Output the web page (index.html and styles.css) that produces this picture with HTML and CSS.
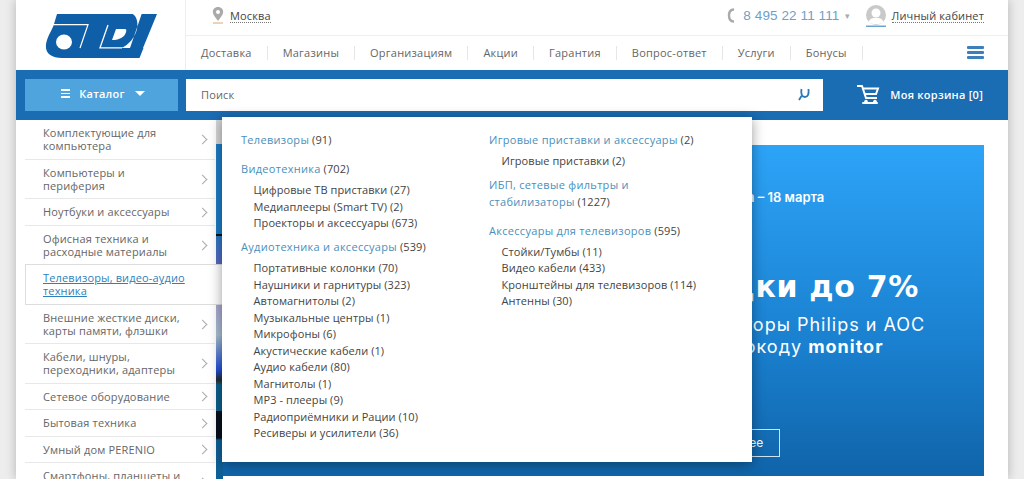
FILE: index.html
```html
<!DOCTYPE html>
<html lang="ru">
<head>
    <meta charset="UTF-8">
    <title>OLDI</title>
    <link rel="stylesheet" href="styles.css">
</head>
<body>
<div class="page">

    <!-- Шапка -->
    <header class="header">
        <a class="logo" href="#">
            <svg width="116" height="50" viewBox="44 12 116 50">
                <path fill="#0f5fa8" d="M57 14H157L143 48H143.500L139.500 58H62C50 58 43 52 47 40C49.500 33 53 28 54 24Z"/>
                <path fill="none" stroke="#fff" stroke-width="1.200" d="M50 24.700H88L80 48"/>
                <path fill="none" stroke="#fff" stroke-width="1.300" d="M108 25L100 47.800H122"/>
                <path fill="#fff" d="M131 13H142L130 48H121C129 45 135 37 137 29C138.500 21 136 15 131 13Z"/>
                <path fill="#fff" d="M116 29H125C127 29 126.500 32 125 34.500C123 38 118 40 112 40Z"/>
                <ellipse fill="#fff" cx="64" cy="42" rx="8" ry="7.500"/>
            </svg>
        </a>
        <div class="header-right">
            <div class="top-row">
                <div class="city">
                    <svg class="pin" width="12" height="17" viewBox="0 0 12 17">
                        <path fill="#aaa" d="M6 0C2.700 0 .8 2.400 .8 5C.8 8 4 11 6 14C8 11 11.200 8 11.200 5C11.200 2.400 9.300 0 6 0Z"/>
                        <circle fill="#fff" cx="6" cy="5" r="2"/>
                        <rect fill="#d9a676" x="1" y="15.500" width="10" height="1"/>
                    </svg>
                    <span class="dotted">Москва</span>
                </div>
                <div class="contacts">
                    <svg class="phone-icon" width="8" height="15" viewBox="0 0 8 15">
                        <path fill="none" stroke="#aaa" stroke-width="2.400" d="M7 1.500C3 1.500 2 4 2 7.500S3 13.500 7 13.500"/>
                    </svg>
                    <span class="phone">8 495 22 11 111</span>
                    <span class="phone-more">▾</span>
                    <svg class="avatar" width="22" height="22" viewBox="0 0 22 22">
                        <circle fill="#c9c9c9" cx="11" cy="10" r="10"/>
                        <circle fill="#fff" cx="11" cy="8" r="4.500"/>
                        <path fill="#fff" d="M3.500 17C5 13 8 13 11 13S17 13 18.500 17C15 20 7 20 3.500 17Z"/>
                        <rect fill="#6aa5d2" x="1" y="20.500" width="20" height="1.500"/>
                    </svg>
                    <span class="dotted">Личный кабинет</span>
                </div>
            </div>
            <nav class="nav">
                <ul>
                    <li><a href="#">Доставка</a></li>
                    <li><a href="#">Магазины</a></li>
                    <li><a href="#">Организациям</a></li>
                    <li><a href="#">Акции</a></li>
                    <li><a href="#">Гарантия</a></li>
                    <li><a href="#">Вопрос-ответ</a></li>
                    <li><a href="#">Услуги</a></li>
                    <li><a href="#">Бонусы</a></li>
                </ul>
                <div class="burger"><span></span><span></span><span></span></div>
            </nav>
        </div>
    </header>

    <!-- Синяя полоса с поиском -->
    <div class="bar">
        <button class="catalog-btn">
            <span class="mini-burger"><span></span><span></span><span></span></span>
            Каталог
            <span class="caret"></span>
        </button>
        <div class="search">
            <span>Поиск</span>
            <svg width="12" height="13" viewBox="0 0 12 13">
                <path fill="none" stroke="#2b78b8" stroke-width="1.800" d="M3.500 1C2.500 6 4 9 7 9C10 9 11 6 10.500 1M3.500 8L1 12"/>
            </svg>
        </div>
        <div class="cart">
            <svg width="23" height="20" viewBox="0 0 23 20">
                <path fill="none" stroke="#fff" stroke-width="2" d="M0 1H5L9 13H20M6 3.500H21L19 9H8"/>
                <path fill="none" stroke="#fff" stroke-width="2" stroke-linecap="round" d="M6 18H20"/>
                <circle fill="#fff" cx="9" cy="16.500" r="1.800"/>
                <circle fill="#fff" cx="18" cy="16.500" r="1.800"/>
            </svg>
            <span>Моя корзина [0]</span>
        </div>
    </div>

    <div class="main">
        <!-- Каталог слева -->
        <ul class="side-menu">
            <li><a href="#">Комплектующие для компьютера</a></li>
            <li><a href="#">Компьютеры и периферия</a></li>
            <li class="short"><a href="#">Ноутбуки и аксессуары</a></li>
            <li><a href="#">Офисная техника и расходные материалы</a></li>
            <li class="active"><a href="#">Телевизоры, видео-аудио техника</a></li>
            <li><a href="#">Внешние жесткие диски, карты памяти, флэшки</a></li>
            <li><a href="#">Кабели, шнуры, переходники, адаптеры</a></li>
            <li class="short"><a href="#">Сетевое оборудование</a></li>
            <li class="short"><a href="#">Бытовая техника</a></li>
            <li class="short"><a href="#">Умный дом PERENIO</a></li>
            <li><a href="#">Смартфоны, планшеты и гаджеты</a></li>
        </ul>

        <div class="slider-edge"></div>

        <div class="content">
            <div class="banner">
                <div class="banner-date">С 12 марта – 18 марта</div>
                <div class="banner-title">Скидки до 7%</div>
                <div class="banner-text">на мониторы Philips и AOC<br>по промокоду <b>monitor</b></div>
                <a class="banner-btn" href="#">Подробнее</a>
            </div>
        </div>

        <!-- Выпадающее меню -->
        <div class="dropdown">
            <div class="drop-col">
                <div class="group"><a href="#">Телевизоры</a> (91)</div>
                <div class="group has-sub">
                    <a href="#">Видеотехника</a> (702)
                    <ul>
                        <li>Цифровые ТВ приставки (27)</li>
                        <li>Медиаплееры (Smart TV) (2)</li>
                        <li>Проекторы и аксессуары (673)</li>
                    </ul>
                </div>
                <div class="group has-sub">
                    <a href="#">Аудиотехника и аксессуары</a> (539)
                    <ul>
                        <li>Портативные колонки (70)</li>
                        <li>Наушники и гарнитуры (323)</li>
                        <li>Автомагнитолы (2)</li>
                        <li>Музыкальные центры (1)</li>
                        <li>Микрофоны (6)</li>
                        <li>Акустические кабели (1)</li>
                        <li>Аудио кабели (80)</li>
                        <li>Магнитолы (1)</li>
                        <li>MP3 - плееры (9)</li>
                        <li>Радиоприёмники и Рации (10)</li>
                        <li>Ресиверы и усилители (36)</li>
                    </ul>
                </div>
            </div>
            <div class="drop-col">
                <div class="group has-sub">
                    <a href="#">Игровые приставки и аксессуары</a> (2)
                    <ul>
                        <li>Игровые приставки (2)</li>
                    </ul>
                </div>
                <div class="group"><a href="#">ИБП, сетевые фильтры и<br>стабилизаторы</a> (1227)</div>
                <div class="group has-sub">
                    <a href="#">Аксессуары для телевизоров</a> (595)
                    <ul>
                        <li>Стойки/Тумбы (11)</li>
                        <li>Видео кабели (433)</li>
                        <li>Кронштейны для телевизоров (114)</li>
                        <li>Антенны (30)</li>
                    </ul>
                </div>
            </div>
        </div>
    </div>

</div>
</body>
</html>
```

FILE: styles.css
```css
body {
    margin: 0;
    background-color: #ededed;
    font-family: "Open Sans", Arial, sans-serif;
    font-size: 11px;
    letter-spacing: 0.15px;
    color: #555;
    overflow: hidden;
}

a {
    color: inherit;
    text-decoration: none;
}

ul {
    list-style-type: none;
    margin: 0;
    padding: 0;
}

.page {
    position: relative;
    width: 992px;
    height: 479px;
    margin: 0 16px;
    background-color: #fff;
    box-shadow: 0 0 10px rgba(0, 0, 0, 0.25);
    overflow: hidden;
}

/* Шапка */
.header {
    display: flex;
    height: 70px;
}

.logo {
    display: flex;
    width: 170px;
    box-sizing: border-box;
    padding: 12px 0 0 28px;
    border-right: 1px solid #eee;
}

.logo svg {
    display: block;
}

.header-right {
    flex: 1;
    min-width: 0;
}

.top-row {
    display: flex;
    justify-content: space-between;
    align-items: center;
    height: 36px;
    box-sizing: border-box;
    padding: 0 24px 4px 26px;
    border-bottom: 1px solid #eee;
}

.city,
.contacts {
    display: flex;
    align-items: center;
}

.pin {
    margin-right: 6px;
}

.dotted {
    color: #444;
    border-bottom: 1px dotted #777;
    line-height: 13px;
}

.phone-icon {
    margin-right: 8px;
}

.phone {
    font-family: "Liberation Sans", Arial, sans-serif;
    font-size: 13.5px;
    letter-spacing: 0.1px;
    color: #6d9fc9;
}

.phone-more {
    margin: 0 14px 0 6px;
    font-size: 9px;
    color: #aaa;
}

.avatar {
    margin-right: 5px;
}

.nav {
    display: flex;
    justify-content: space-between;
    align-items: center;
    height: 33px;
    padding-right: 24px;
}

.nav ul {
    display: flex;
}

.nav li {
    padding: 0 15px;
    border-right: 1px solid #e6e6e6;
    line-height: 14px;
    letter-spacing: 0.23px;
    color: #666;
}

.burger span {
    display: block;
    width: 17px;
    height: 3px;
    margin: 2px 0;
    border-radius: 1px;
    background-color: #3b80bd;
}

/* Синяя полоса */
.bar {
    display: flex;
    align-items: center;
    height: 50px;
    padding: 0 25px 0 9px;
    background-color: #1a6cb3;
}

.catalog-btn {
    display: flex;
    justify-content: center;
    align-items: center;
    width: 153px;
    height: 32px;
    margin-right: 8px;
    padding: 0 0 3px 3px;
    border: none;
    background-color: #4fa4dd;
    color: #fff;
    font-family: inherit;
    font-size: 11px;
    font-weight: 600;
    letter-spacing: 0.2px;
}

.mini-burger {
    margin-right: 9px;
}

.mini-burger span {
    display: block;
    width: 9px;
    height: 1.5px;
    margin: 2px 0;
    background-color: #fff;
}

.caret {
    width: 0;
    height: 0;
    margin-left: 10px;
    border-top: 5px solid #fff;
    border-left: 5px solid transparent;
    border-right: 5px solid transparent;
}

.search {
    display: flex;
    justify-content: space-between;
    align-items: center;
    width: 637px;
    height: 32px;
    box-sizing: border-box;
    padding: 0 13px 1px 15px;
    background-color: #fff;
    color: #666;
}

.cart {
    display: flex;
    align-items: center;
    margin-left: auto;
    color: #fff;
    font-weight: 600;
    letter-spacing: 0.25px;
}

.cart svg {
    margin-right: 10px;
}

.cart span {
    padding-bottom: 2px;
}

/* Основная часть */
.main {
    position: relative;
    display: flex;
    height: 359px;
    padding-left: 9px;
}

.side-menu {
    width: 190px;
    flex-shrink: 0;
    color: #666;
}

.side-menu li {
    display: flex;
    align-items: center;
    position: relative;
    height: 38.5px;
    padding: 0 26px 0 18px;
    border-bottom: 1px solid #e8e8e8;
    line-height: 13px;
}

.side-menu li.short {
    height: 25.5px;
}

.side-menu li::after {
    content: "";
    position: absolute;
    right: 9px;
    top: 50%;
    width: 6px;
    height: 6px;
    margin-top: -3px;
    border-top: 1.5px solid #aaa;
    border-right: 1.5px solid #aaa;
    transform: rotate(45deg);
}

.side-menu li.active {
    width: 165px;
    padding-left: 17px;
    padding-right: 32px;
    border: 1px solid #ddd;
    border-right: none;
    margin-top: -1px;
    background-color: #fff;
    z-index: 1;
    color: #2f7fb8;
}

.side-menu li.active a {
    text-decoration: underline;
}

.side-menu li.active::after {
    display: none;
}

.slider-edge {
    width: 7px;
    flex-shrink: 0;
    margin-left: 1px;
    background: linear-gradient(to bottom,
        #d6d6d6 0, #d6d6d6 24px,
        #1a7cc4 24px, #1a7cc4 114px,
        #111 114px, #111 116px,
        #2a78c4 116px, #5a68c0 145px,
        #fff 145px, #fff 184px,
        #a9a5d0 184px, #a8c0d0 215px, #1f4fd8 250px,
        #2a2a2a 260px, #0c5f8c 265px, #0c5f8c 291px,
        #06101a 291px, #06101a 318px,
        #0f6099 320px);
}

.content {
    flex: 1;
    min-width: 0;
    padding: 25px 24px 3px 0;
}

.banner {
    height: 331px;
    box-sizing: border-box;
    padding: 44px 0 0 442px;
    background: linear-gradient(to bottom, #2da4f8 0, #1a80cf 60%, #1064a9 100%);
    color: #fff;
    letter-spacing: 0;
    font-family: "Inter", "Open Sans", sans-serif;
}

.banner-date {
    margin-left: 20px;
    font-size: 13px;
    font-weight: 600;
    line-height: 16px;
}

.banner-title {
    margin-top: 64px;
    font-family: "DejaVu Sans", sans-serif;
    font-size: 30px;
    font-weight: 700;
    letter-spacing: 0.7px;
    line-height: 36px;
    white-space: nowrap;
}

.banner-text {
    margin-top: 9px;
    font-size: 18px;
    letter-spacing: 1px;
    line-height: 22px;
    white-space: nowrap;
}

.banner-btn {
    display: block;
    width: 98px;
    margin-top: 71px;
    margin-left: 15px;
    border: 1px solid #cfe5f5;
    font-size: 12px;
    line-height: 26px;
    text-align: center;
}

/* Выпадающее меню */
.dropdown {
    position: absolute;
    left: 206px;
    top: -3px;
    z-index: 2;
    display: flex;
    width: 530px;
    height: 345px;
    box-sizing: border-box;
    padding: 15px 0 0 19px;
    background-color: #fff;
    box-shadow: 0 2px 12px rgba(0, 0, 0, 0.4);
    line-height: 16.5px;
    letter-spacing: 0.08px;
    color: #444;
}

.drop-col {
    width: 248px;
}

.group {
    margin-bottom: 12.5px;
}

.group.has-sub {
    margin-bottom: 7.5px;
}

.group a {
    letter-spacing: 0.3px;
    color: #4a8fbb;
}

.group ul {
    margin-top: 4.5px;
    padding-left: 12.5px;
}
```
